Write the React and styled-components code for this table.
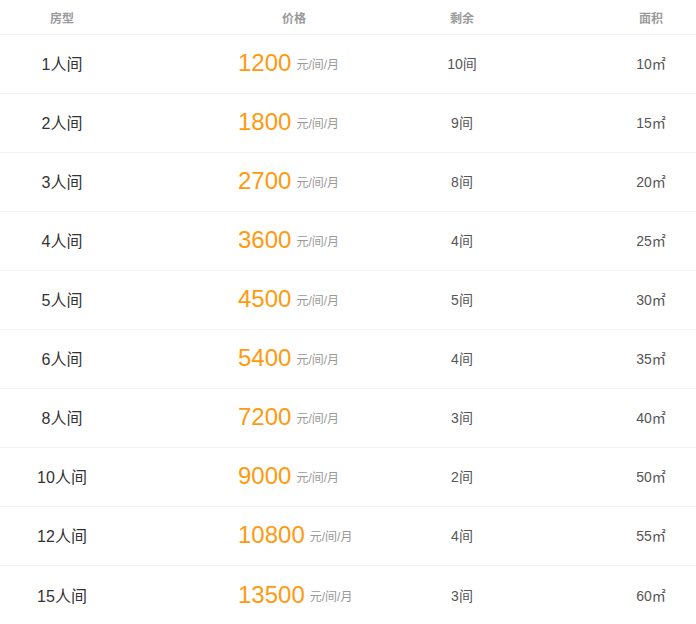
import React from 'react'
import styled, { createGlobalStyle } from 'styled-components'

const rooms = [
    { type: '1人间', price: 1200, left: 10, area: 10 },
    { type: '2人间', price: 1800, left: 9, area: 15 },
    { type: '3人间', price: 2700, left: 8, area: 20 },
    { type: '4人间', price: 3600, left: 4, area: 25 },
    { type: '5人间', price: 4500, left: 5, area: 30 },
    { type: '6人间', price: 5400, left: 4, area: 35 },
    { type: '8人间', price: 7200, left: 3, area: 40 },
    { type: '10人间', price: 9000, left: 2, area: 50 },
    { type: '12人间', price: 10800, left: 4, area: 55 },
    { type: '15人间', price: 13500, left: 3, area: 60 }
]

const GlobalStyle = createGlobalStyle`
    body {
        margin: 0;
        background: #fff;
        font-family: Arial, "Liberation Sans", "Noto Sans CJK SC", sans-serif;
    }
`

const Table = styled.div`
    width: 696px;
`

const Row = styled.div`
    display: grid;
    grid-template-columns: 124px 264px 148px 160px;
    align-items: center;
    height: ${p => p.$head ? '35px' : '59px'};
    padding-bottom: ${p => p.$head ? 0 : 2}px;
    border-bottom: ${p => p.$last ? 'none' : '1px solid #f2f2f2'};
    box-sizing: border-box;
`

const Cell = styled.div`
    display: flex;
    justify-content: center;
    padding-left: ${p => p.$pl || 0}px;
`

const HeadText = styled.span`
    font-size: 12px;
    font-weight: bold;
    color: #9a9a9a;
`

const TypeText = styled.span`
    font-size: 16px;
    color: #333;
`

const PriceBox = styled.div`
    width: 112px;
    display: flex;
    align-items: center;
    white-space: nowrap;
`

const Price = styled.span`
    font-size: 24px;
    color: #ff9a0e;
    margin-right: 5px;
`

const Unit = styled.span`
    font-size: 12px;
    color: #999;
    padding-top: 1px;
`

const Plain = styled.span`
    font-size: 14px;
    color: #555;
`

export default function App() {
    return (
        <React.Fragment>
            <GlobalStyle />
            <Table>
                <Row $head>
                    <Cell><HeadText>房型</HeadText></Cell>
                    <Cell $pl={76}><HeadText>价格</HeadText></Cell>
                    <Cell><HeadText>剩余</HeadText></Cell>
                    <Cell $pl={70}><HeadText>面积</HeadText></Cell>
                </Row>
                {rooms.map((r, i) => (
                    <Row key={i} $last={i === rooms.length - 1}>
                        <Cell><TypeText>{r.type}</TypeText></Cell>
                        <Cell $pl={76}>
                            <PriceBox>
                                <Price>{r.price}</Price>
                                <Unit>元/间/月</Unit>
                            </PriceBox>
                        </Cell>
                        <Cell><Plain>{r.left}间</Plain></Cell>
                        <Cell $pl={70}><Plain>{r.area}㎡</Plain></Cell>
                    </Row>
                ))}
            </Table>
        </React.Fragment>
    )
}
